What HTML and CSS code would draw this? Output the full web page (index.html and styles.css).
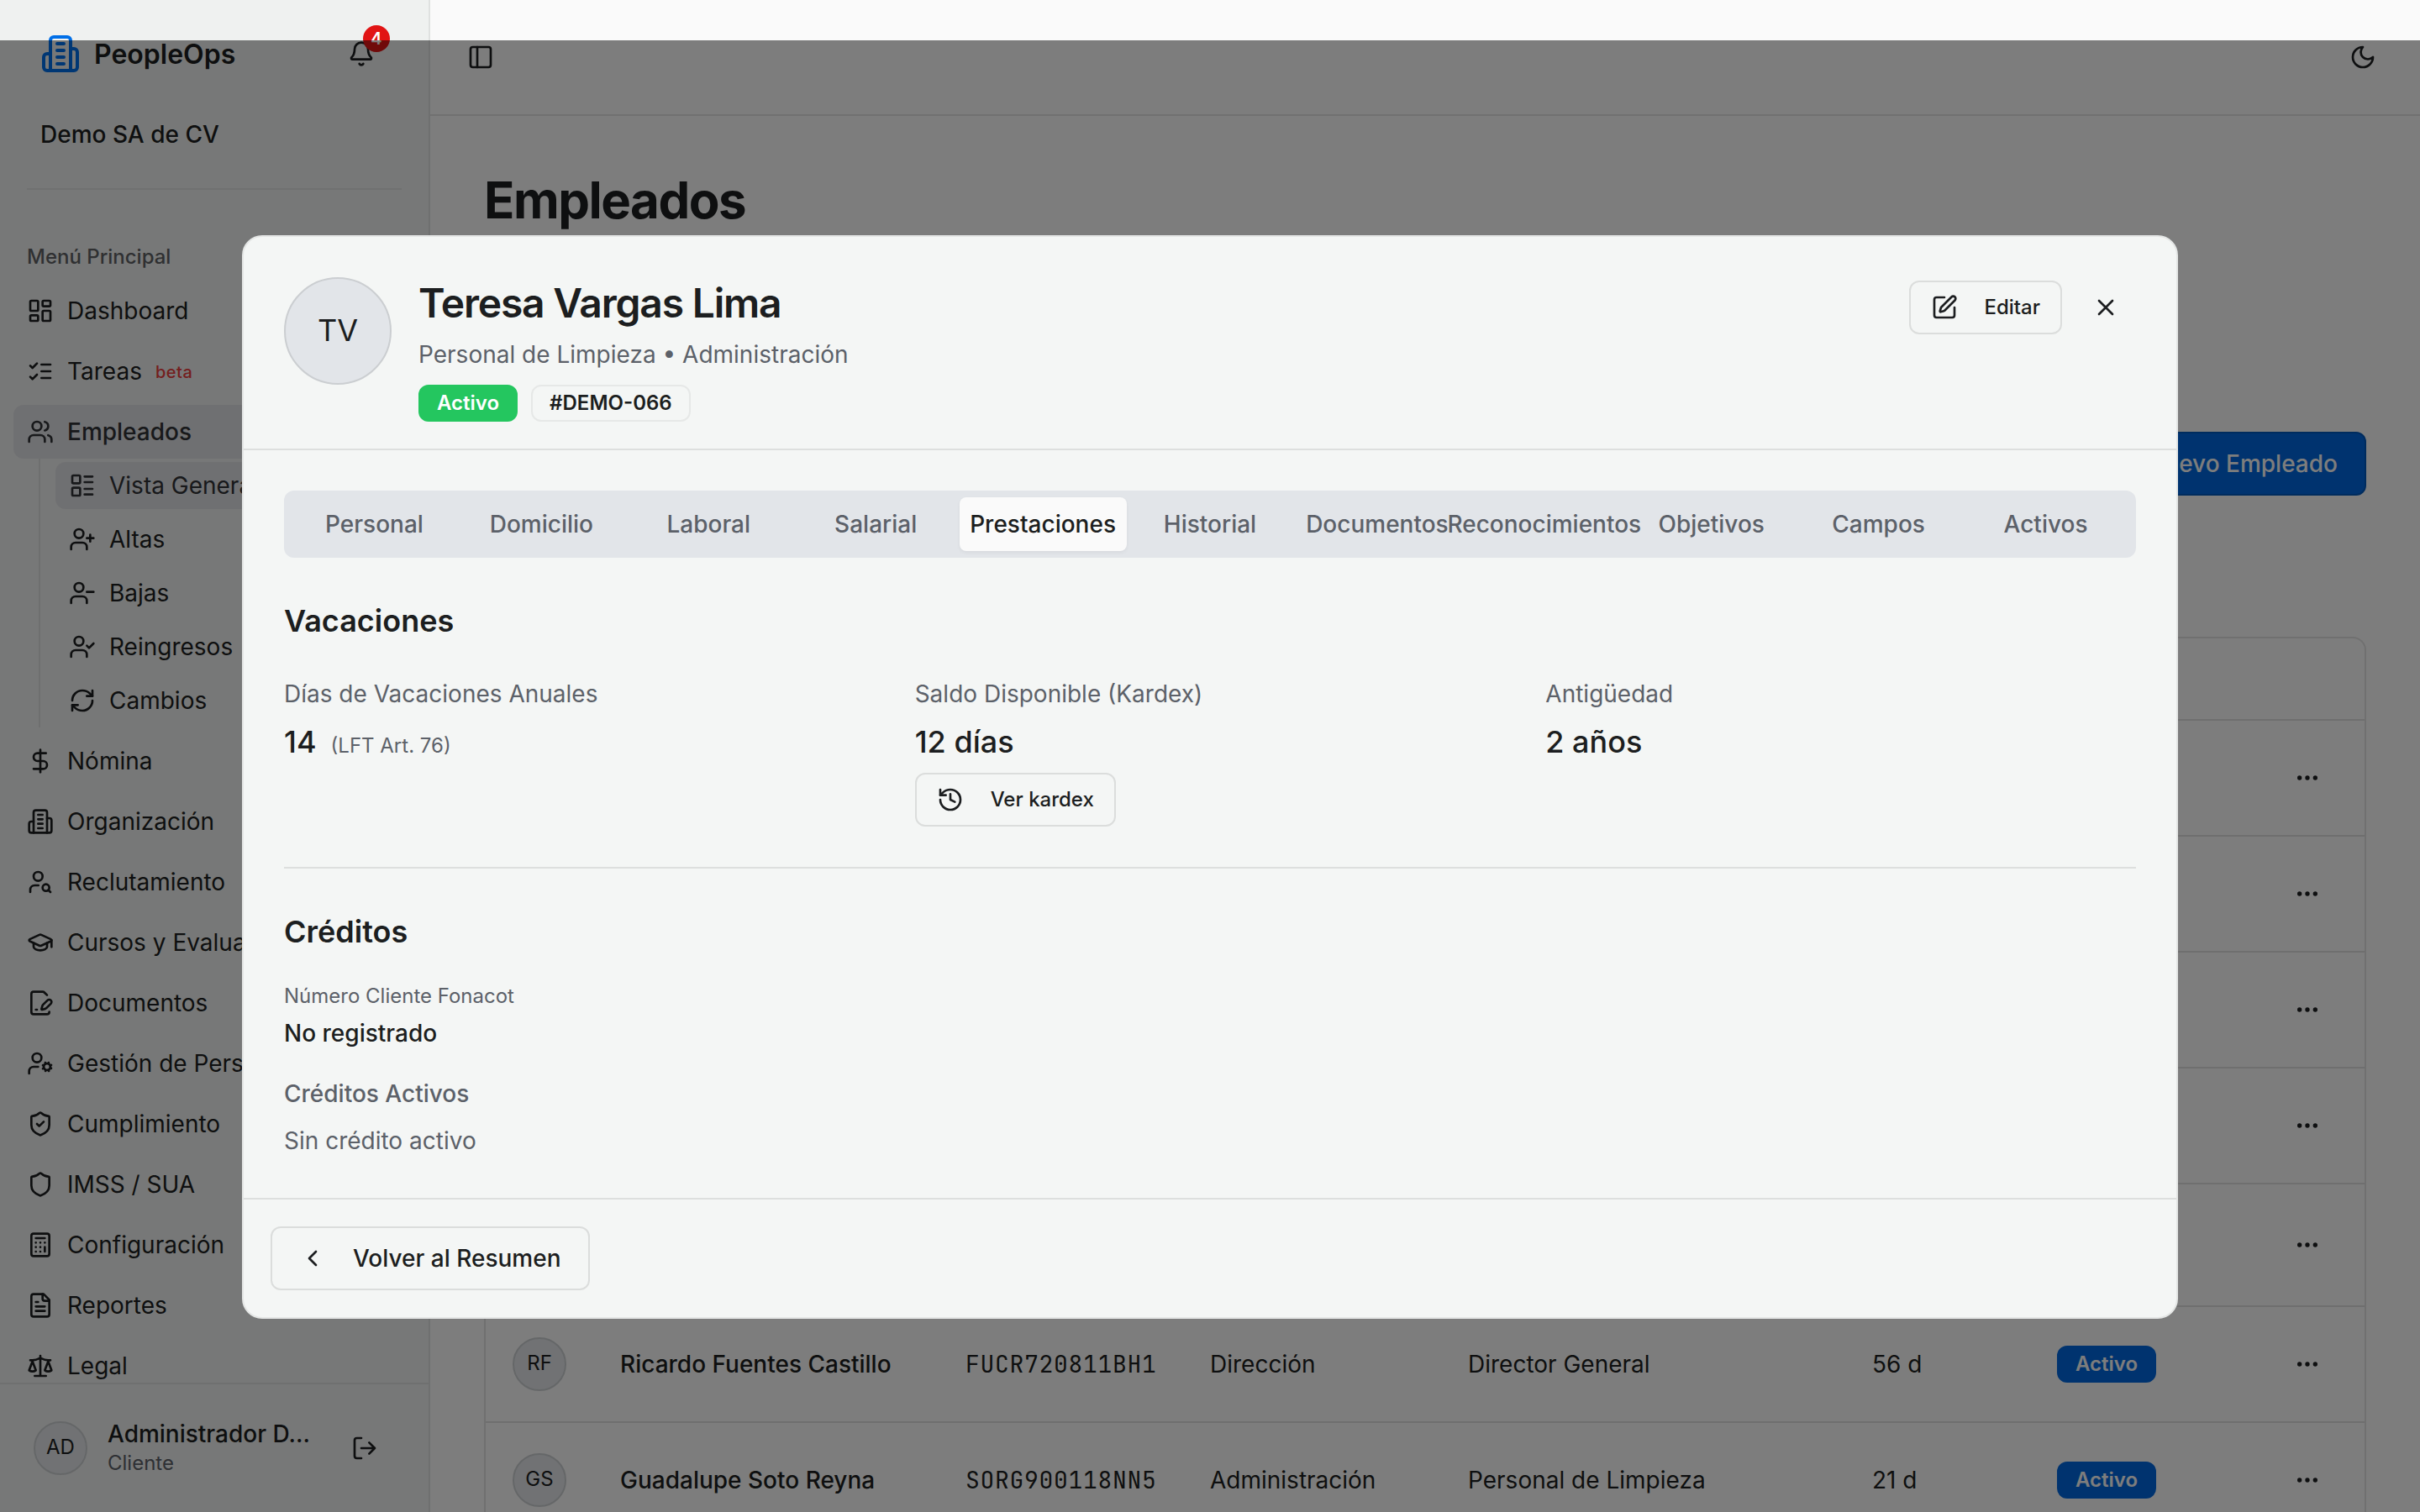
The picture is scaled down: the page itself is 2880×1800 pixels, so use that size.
FILE: index.html
```
<!DOCTYPE html>
<html lang="es">
<head>
<meta charset="utf-8">
<title>PeopleOps - Empleados</title>
<link rel="stylesheet" href="styles.css">
</head>
<body>
<svg class="sprite" aria-hidden="true">
  <symbol id="building" viewBox="0 0 24 24"><path d="M6 22V4a2 2 0 0 1 2-2h8a2 2 0 0 1 2 2v18Z"/><path d="M6 12H4a2 2 0 0 0-2 2v6a2 2 0 0 0 2 2h2"/><path d="M18 9h2a2 2 0 0 1 2 2v9a2 2 0 0 1-2 2h-2"/><path d="M10 6h4M10 10h4M10 14h4M10 18h4"/></symbol>
  <symbol id="bell" viewBox="0 0 24 24"><path d="M10.268 21a2 2 0 0 0 3.464 0"/><path d="M3.262 15.326A1 1 0 0 0 4 17h16a1 1 0 0 0 .74-1.673C19.41 13.956 18 12.499 18 8A6 6 0 0 0 6 8c0 4.499-1.411 5.956-2.738 7.326"/></symbol>
  <symbol id="dashboard" viewBox="0 0 24 24"><rect width="7" height="9" x="3" y="3" rx="1"/><rect width="7" height="5" x="14" y="3" rx="1"/><rect width="7" height="9" x="14" y="12" rx="1"/><rect width="7" height="5" x="3" y="16" rx="1"/></symbol>
  <symbol id="checks" viewBox="0 0 24 24"><path d="m3 17 2 2 4-4M3 7l2 2 4-4M13 6h8M13 12h8M13 18h8"/></symbol>
  <symbol id="users" viewBox="0 0 24 24"><path d="M16 21v-2a4 4 0 0 0-4-4H6a4 4 0 0 0-4 4v2"/><circle cx="9" cy="7" r="4"/><path d="M22 21v-2a4 4 0 0 0-3-3.87M16 3.13a4 4 0 0 1 0 7.75"/></symbol>
  <symbol id="layout-list" viewBox="0 0 24 24"><rect width="7" height="7" x="3" y="3" rx="1"/><rect width="7" height="7" x="3" y="14" rx="1"/><path d="M14 4h7M14 9h7M14 15h7M14 20h7"/></symbol>
  <symbol id="user-plus" viewBox="0 0 24 24"><path d="M16 21v-2a4 4 0 0 0-4-4H6a4 4 0 0 0-4 4v2"/><circle cx="9" cy="7" r="4"/><path d="M19 8v6M22 11h-6"/></symbol>
  <symbol id="user-minus" viewBox="0 0 24 24"><path d="M16 21v-2a4 4 0 0 0-4-4H6a4 4 0 0 0-4 4v2"/><circle cx="9" cy="7" r="4"/><path d="M22 11h-6"/></symbol>
  <symbol id="user-check" viewBox="0 0 24 24"><path d="M16 21v-2a4 4 0 0 0-4-4H6a4 4 0 0 0-4 4v2"/><circle cx="9" cy="7" r="4"/><path d="m16 11 2 2 4-4"/></symbol>
  <symbol id="refresh" viewBox="0 0 24 24"><path d="M3 12a9 9 0 0 1 9-9 9.75 9.75 0 0 1 6.74 2.74L21 8"/><path d="M21 3v5h-5"/><path d="M21 12a9 9 0 0 1-9 9 9.75 9.75 0 0 1-6.74-2.74L3 16"/><path d="M8 16H3v5"/></symbol>
  <symbol id="dollar" viewBox="0 0 24 24"><path d="M12 2v20"/><path d="M17 5H9.5a3.5 3.5 0 0 0 0 7h5a3.5 3.5 0 0 1 0 7H6"/></symbol>
  <symbol id="user-search" viewBox="0 0 24 24"><circle cx="10" cy="7" r="4"/><path d="M10.3 15H7a4 4 0 0 0-4 4v2"/><circle cx="17" cy="17" r="3"/><path d="m21 21-1.9-1.9"/></symbol>
  <symbol id="graduation" viewBox="0 0 24 24"><path d="M21.42 10.922a1 1 0 0 0-.019-1.838L12.83 5.18a2 2 0 0 0-1.66 0L2.6 9.08a1 1 0 0 0 0 1.832l8.57 3.908a2 2 0 0 0 1.66 0z"/><path d="M22 10v6"/><path d="M6 12.5V16a6 3 0 0 0 12 0v-3.5"/></symbol>
  <symbol id="file-pen" viewBox="0 0 24 24"><path d="m18 5-2.414-2.414A2 2 0 0 0 14.172 2H6a2 2 0 0 0-2 2v16a2 2 0 0 0 2 2h12a2 2 0 0 0 2-2"/><path d="M21.378 12.626a1 1 0 0 0-3.004-3.004l-4.01 4.012a2 2 0 0 0-.506.854l-.837 2.87a.5.5 0 0 0 .62.62l2.87-.837a2 2 0 0 0 .854-.506z"/><path d="M8 18h1"/></symbol>
  <symbol id="user-cog" viewBox="0 0 24 24"><circle cx="18" cy="15" r="3"/><circle cx="9" cy="7" r="4"/><path d="M10 15H6a4 4 0 0 0-4 4v2"/><path d="m21.7 16.4-.9-.3M15.2 13.9l-.9-.3M16.6 18.7l.3-.9M19.1 12.2l.3-.9M19.6 18.7l-.4-1M16.8 12.3l-.4-1M14.3 16.6l1-.4M20.7 13.8l1-.4"/></symbol>
  <symbol id="shield" viewBox="0 0 24 24"><path d="M20 13c0 5-3.5 7.5-7.66 8.95a1 1 0 0 1-.67-.01C7.5 20.5 4 18 4 13V6a1 1 0 0 1 1-1c2 0 4.5-1.2 6.24-2.72a1.17 1.17 0 0 1 1.52 0C14.51 3.81 17 5 19 5a1 1 0 0 1 1 1z"/></symbol>
  <symbol id="shield-check" viewBox="0 0 24 24"><path d="M20 13c0 5-3.5 7.5-7.66 8.95a1 1 0 0 1-.67-.01C7.5 20.5 4 18 4 13V6a1 1 0 0 1 1-1c2 0 4.5-1.2 6.24-2.72a1.17 1.17 0 0 1 1.52 0C14.51 3.81 17 5 19 5a1 1 0 0 1 1 1z"/><path d="m9 12 2 2 4-4"/></symbol>
  <symbol id="calculator" viewBox="0 0 24 24"><rect width="16" height="20" x="4" y="2" rx="2"/><path d="M8 6h8M16 14v4M16 10h.01M12 10h.01M8 10h.01M12 14h.01M8 14h.01M12 18h.01M8 18h.01"/></symbol>
  <symbol id="file-text" viewBox="0 0 24 24"><path d="M15 2H6a2 2 0 0 0-2 2v16a2 2 0 0 0 2 2h12a2 2 0 0 0 2-2V7Z"/><path d="M14 2v4a2 2 0 0 0 2 2h4M10 9H8M16 13H8M16 17H8"/></symbol>
  <symbol id="scale" viewBox="0 0 24 24"><path d="m16 16 3-8 3 8c-.87.65-1.92 1-3 1s-2.13-.35-3-1Z"/><path d="m2 16 3-8 3 8c-.87.65-1.92 1-3 1s-2.13-.35-3-1Z"/><path d="M7 21h10M12 3v18M3 7h2c2 0 5-1 7-2 2 1 5 2 7 2h2"/></symbol>
  <symbol id="logout" viewBox="0 0 24 24"><path d="m16 17 5-5-5-5M21 12H9M9 21H5a2 2 0 0 1-2-2V5a2 2 0 0 1 2-2h4"/></symbol>
  <symbol id="panel" viewBox="0 0 24 24"><rect width="18" height="18" x="3" y="3" rx="2"/><path d="M9 3v18"/></symbol>
  <symbol id="moon" viewBox="0 0 24 24"><path d="M12 3a6 6 0 0 0 9 9 9 9 0 1 1-9-9Z"/></symbol>
  <symbol id="plus" viewBox="0 0 24 24"><path d="M5 12h14M12 5v14"/></symbol>
  <symbol id="dots" viewBox="0 0 24 24"><circle cx="12" cy="12" r="1"/><circle cx="19" cy="12" r="1"/><circle cx="5" cy="12" r="1"/></symbol>
  <symbol id="edit" viewBox="0 0 24 24"><path d="M12 3H5a2 2 0 0 0-2 2v14a2 2 0 0 0 2 2h14a2 2 0 0 0 2-2v-7"/><path d="M18.375 2.625a1 1 0 0 1 3 3l-9.013 9.014a2 2 0 0 1-.853.505l-2.873.84a.5.5 0 0 1-.62-.62l.84-2.873a2 2 0 0 1 .506-.852z"/></symbol>
  <symbol id="close" viewBox="0 0 24 24"><path d="M18 6 6 18M6 6l12 12"/></symbol>
  <symbol id="history" viewBox="0 0 24 24"><path d="M3 12a9 9 0 1 0 9-9 9.75 9.75 0 0 0-6.74 2.74L3 8"/><path d="M3 3v5h5M12 7v5l4 2"/></symbol>
  <symbol id="chevron" viewBox="0 0 24 24"><path d="m15 18-6-6 6-6"/></symbol>
</svg>

<div class="app">
  <aside class="sidebar">
    <div class="brand">
      <svg class="icon logo"><use href="#building"/></svg>
      <span class="brand-name">PeopleOps</span>
      <span class="bell"><svg class="icon"><use href="#bell"/></svg><span class="bell-count">4</span></span>
    </div>
    <div class="company">Demo SA de CV</div>
    <div class="menu-label">Menú Principal</div>
    <nav class="menu">
      <a class="item"><svg class="icon"><use href="#dashboard"/></svg>Dashboard</a>
      <a class="item"><svg class="icon"><use href="#checks"/></svg>Tareas<span class="beta">beta</span></a>
      <div class="group">
        <a class="item current"><svg class="icon"><use href="#users"/></svg>Empleados</a>
        <div class="submenu">
          <a class="subitem selected"><svg class="icon"><use href="#layout-list"/></svg>Vista General</a>
          <a class="subitem"><svg class="icon"><use href="#user-plus"/></svg>Altas</a>
          <a class="subitem"><svg class="icon"><use href="#user-minus"/></svg>Bajas</a>
          <a class="subitem"><svg class="icon"><use href="#user-check"/></svg>Reingresos</a>
          <a class="subitem"><svg class="icon"><use href="#refresh"/></svg>Cambios</a>
        </div>
      </div>
      <a class="item"><svg class="icon"><use href="#dollar"/></svg>Nómina</a>
      <a class="item"><svg class="icon"><use href="#building"/></svg>Organización</a>
      <a class="item"><svg class="icon"><use href="#user-search"/></svg>Reclutamiento</a>
      <a class="item"><svg class="icon"><use href="#graduation"/></svg>Cursos y Evaluaciones</a>
      <a class="item"><svg class="icon"><use href="#file-pen"/></svg>Documentos</a>
      <a class="item"><svg class="icon"><use href="#user-cog"/></svg>Gestión de Personal</a>
      <a class="item"><svg class="icon"><use href="#shield-check"/></svg>Cumplimiento</a>
      <a class="item"><svg class="icon"><use href="#shield"/></svg>IMSS / SUA</a>
      <a class="item"><svg class="icon"><use href="#calculator"/></svg>Configuración</a>
      <a class="item"><svg class="icon"><use href="#file-text"/></svg>Reportes</a>
      <a class="item"><svg class="icon"><use href="#scale"/></svg>Legal</a>
    </nav>
    <div class="account">
      <span class="avatar">AD</span>
      <div class="account-text"><div class="account-name">Administrador D...</div><div class="account-role">Cliente</div></div>
      <svg class="icon"><use href="#logout"/></svg>
    </div>
  </aside>

  <main class="main">
    <header class="topbar">
      <svg class="icon"><use href="#panel"/></svg>
      <svg class="icon"><use href="#moon"/></svg>
    </header>
    <div class="content">
      <h1 class="page-title">Empleados</h1>
      <div class="actions"><button class="primary"><svg class="icon"><use href="#plus"/></svg>Nuevo Empleado</button></div>
      <div class="table">
        <div class="row head"></div>
        <div class="row"><svg class="icon more"><use href="#dots"/></svg></div>
        <div class="row"><svg class="icon more"><use href="#dots"/></svg></div>
        <div class="row"><svg class="icon more"><use href="#dots"/></svg></div>
        <div class="row"><svg class="icon more"><use href="#dots"/></svg></div>
        <div class="row tall"><svg class="icon more"><use href="#dots"/></svg></div>
        <div class="row"><span class="avatar">RF</span><span class="name">Ricardo Fuentes Castillo</span><span class="rfc">FUCR720811BH1</span><span>Dirección</span><span>Director General</span><span>56 d</span><span class="badge blue">Activo</span><svg class="icon more"><use href="#dots"/></svg></div>
        <div class="row"><span class="avatar">GS</span><span class="name">Guadalupe Soto Reyna</span><span class="rfc">SORG900118NN5</span><span>Administración</span><span>Personal de Limpieza</span><span>21 d</span><span class="badge blue">Activo</span><svg class="icon more"><use href="#dots"/></svg></div>
      </div>
    </div>
  </main>
</div>

<div class="overlay"></div>

<section class="modal" role="dialog">
  <header class="modal-head">
    <span class="avatar large">TV</span>
    <div class="who">
      <h2 class="who-name">Teresa Vargas Lima</h2>
      <p class="who-role">Personal de Limpieza • Administración</p>
      <div class="badges"><span class="badge green">Activo</span><span class="badge outline">#DEMO-066</span></div>
    </div>
    <div class="head-actions">
      <button class="btn small"><svg class="icon"><use href="#edit"/></svg>Editar</button>
      <svg class="icon"><use href="#close"/></svg>
    </div>
  </header>
  <div class="modal-body">
    <div class="tabs">
      <span class="tab">Personal</span><span class="tab">Domicilio</span><span class="tab">Laboral</span><span class="tab">Salarial</span><span class="tab active">Prestaciones</span><span class="tab">Historial</span><span class="tab">Documentos</span><span class="tab">Reconocimientos</span><span class="tab">Objetivos</span><span class="tab">Campos</span><span class="tab">Activos</span>
    </div>
    <section class="vacations">
      <h3 class="section-title">Vacaciones</h3>
      <div class="stats">
        <div><p class="label">Días de Vacaciones Anuales</p><p class="value">14<span class="note">(LFT Art. 76)</span></p></div>
        <div><p class="label">Saldo Disponible (Kardex)</p><p class="value">12 días</p><button class="btn small"><svg class="icon"><use href="#history"/></svg>Ver kardex</button></div>
        <div><p class="label">Antigüedad</p><p class="value">2 años</p></div>
      </div>
    </section>
    <section class="credits">
      <h3 class="section-title">Créditos</h3>
      <p class="client-label">Número Cliente Fonacot</p>
      <p class="client-value">No registrado</p>
      <p class="active-label">Créditos Activos</p>
      <p class="active-value">Sin crédito activo</p>
    </section>
  </div>
  <footer class="modal-foot"><button class="btn"><svg class="icon"><use href="#chevron"/></svg>Volver al Resumen</button></footer>
</section>
</body>
</html>
```
FILE: styles.css
```
* { box-sizing: border-box; }
body, h1, h2, h3, p { margin: 0; }
body {
  position: relative;
  width: 2880px;
  height: 1800px;
  overflow: hidden;
  background: #fafafa;
  color: #1c1e20;
  font: 400 28px/40px Inter, sans-serif;
}
.sprite { display: none; }
.icon {
  flex: none;
  width: 32px;
  height: 32px;
  fill: none;
  stroke: currentColor;
  stroke-width: 2;
  stroke-linecap: round;
  stroke-linejoin: round;
}
button { font: inherit; color: inherit; }

.app { display: flex; height: 1800px; overflow: hidden; }

/* Sidebar */
.sidebar {
  display: flex;
  flex-direction: column;
  width: 512px;
  flex: none;
  background: #eff1f0;
  border-right: 2px solid #dfe1e0;
}
.brand { display: flex; align-items: center; height: 48px; margin: 40px 64px 0 48px; }
.logo { width: 48px; height: 48px; color: #006fe8; }
.brand-name { margin-left: 16px; padding-top: 2px; font-size: 32px; font-weight: 600; flex: 1; }
.bell { position: relative; display: flex; }
.bell-count {
  position: absolute;
  left: 18px;
  top: -18px;
  width: 32px;
  height: 32px;
  border-radius: 50%;
  background: #e11414;
  color: #fff;
  font-size: 20px;
  font-weight: 600;
  line-height: 33px;
  text-align: center;
}
.company { margin: 52px 32px 0; padding: 0 16px 44px; border-bottom: 2px solid #e0e2e1; font-weight: 500; }
.menu-label { margin: 63px 32px 15px; height: 34px; line-height: 34px; font-size: 24px; font-weight: 500; color: #5e6164; }
.menu { display: flex; flex-direction: column; gap: 8px; flex: 1; min-height: 0; padding: 0 16px; overflow: hidden; }
.item, .subitem { display: flex; align-items: center; gap: 16px; flex: none; padding: 0 16px; white-space: nowrap; border-radius: 12px; }
.item { height: 64px; }
.subitem { height: 56px; }
.current, .selected { background: #dfe0e4; color: #303236; }
.current { font-weight: 500; }
.submenu { display: flex; flex-direction: column; gap: 8px; margin: 0 0 0 30px; padding: 4px 0 4px 18px; border-left: 2px solid #dddfde; }
.beta { padding-top: 2px; font-size: 20px; font-weight: 500; letter-spacing: .025em; color: #e83c3c; }
.account { display: flex; align-items: center; height: 154px; padding: 0 60px 0 40px; border-top: 2px solid #dfe1e0; }
.account-text { flex: 1; margin-left: 24px; }
.account-name { font-weight: 500; line-height: 36px; }
.account-role { font-size: 24px; line-height: 34px; color: #5c6169; }

.avatar {
  display: flex;
  align-items: center;
  justify-content: center;
  flex: none;
  width: 64px;
  height: 64px;
  padding-bottom: 2px;
  border: 2px solid #cbced1;
  border-radius: 50%;
  background: #e2e5e9;
  font-size: 24px;
}
.avatar.large { width: 128px; height: 128px; font-size: 36px; }

/* Page */
.main { flex: 1; display: flex; flex-direction: column; }
.topbar { display: flex; flex: none; align-items: center; justify-content: space-between; height: 138px; padding: 0 52px 0 44px; border-bottom: 2px solid #e0e0e0; }
.content { flex: none; padding: 64px 64px 0; }
.page-title { height: 72px; line-height: 72px; font-size: 60px; font-weight: 700; letter-spacing: -.025em; }
.actions { display: flex; justify-content: flex-end; margin-top: 240px; }
.primary {
  display: flex;
  align-items: center;
  gap: 32px;
  height: 76px;
  padding: 0 32px;
  border: 2px solid #0058bd;
  border-radius: 12px;
  background: #0067de;
  color: #fafafa;
  font-weight: 500;
}
.table { margin-top: 168px; border: 2px solid #e0e0e0; border-bottom: 0; border-radius: 16px 16px 0 0; }
.row {
  display: grid;
  grid-template-columns: 128px 411px 291px 307px 481px 220px 200px 1fr;
  align-items: center;
  height: 138px;
  padding: 0 32px;
  border-bottom: 2px solid #dedede;
}
.row.head { height: 98px; }
.row.tall { height: 146px; }
.row .name { font-weight: 500; }
.rfc { font-family: "JetBrains Mono", "Liberation Mono", monospace; letter-spacing: .025em; }
.more { grid-column: 8; justify-self: end; margin-right: 20px; }

.badge {
  justify-self: start;
  height: 44px;
  padding: 0 20px;
  border: 2px solid transparent;
  border-radius: 12px;
  font-size: 24px;
  font-weight: 600;
  line-height: 40px;
}
.badge.blue { background: #0067de; border-color: #0067de; color: #fafafa; }
.badge.green { background: #24c65f; border-color: #24c65f; color: #fff; }
.badge.outline { border-color: #e6e8e7; }

.overlay { position: absolute; inset: 48px 0 0; background: rgba(0, 0, 0, .5); }

/* Employee dialog */
.modal {
  position: absolute;
  left: 288px;
  top: 280px;
  width: 2304px;
  height: 1290px;
  display: flex;
  flex-direction: column;
  border: 2px solid #e4e6e5;
  border-radius: 24px;
  background: #f4f6f5;
}
.modal-head { display: flex; align-items: flex-start; height: 254px; padding: 48px 48px 0; border-bottom: 2px solid #dddfde; }
.who { flex: 1; margin-left: 32px; }
.who-name { height: 62px; line-height: 62px; font-size: 48px; font-weight: 600; letter-spacing: -.025em; }
.who-role { margin-top: 10px; color: #5c6169; }
.badges { display: flex; gap: 16px; margin-top: 16px; }
.head-actions { display: flex; align-items: center; gap: 36px; padding: 4px 20px 0 0; }
.btn {
  display: inline-flex;
  align-items: center;
  gap: 32px;
  height: 76px;
  padding: 0 32px;
  border: 2px solid #dbdddc;
  border-radius: 12px;
  background: transparent;
  font-weight: 500;
}
.btn.small { height: 64px; padding: 0 24px; font-size: 24px; }
.head-actions .btn { gap: 31px; }

.modal-body { flex: 1; padding: 48px 48px 0; }
.tabs { display: grid; grid-template-columns: repeat(11, minmax(0, 1fr)); height: 80px; padding: 8px; border-radius: 12px; background: #e2e5e9; }
.tab { display: flex; align-items: center; justify-content: center; white-space: nowrap; font-weight: 500; color: #5c6169; }
.tab.active { border-radius: 8px; background: #fafafa; color: #1c1e20; box-shadow: 0 2px 4px rgba(0, 0, 0, .05); }

.section-title { height: 56px; line-height: 54px; font-size: 36px; font-weight: 600; }
.vacations { margin-top: 48px; height: 322px; border-bottom: 2px solid #dddfde; }
.stats { display: grid; grid-template-columns: repeat(3, 1fr); gap: 48px; margin-top: 38px; }
.label { color: #5c6169; }
.value { height: 56px; margin: 8px 0 10px; line-height: 58px; font-size: 36px; font-weight: 500; }
.note { margin-left: 17px; font-size: 24px; font-weight: 400; color: #5c6169; }
.credits { padding-top: 48px; }
.client-label { margin-top: 32px; font-size: 24px; line-height: 32px; color: #5c6169; }
.client-value { margin-top: 8px; font-weight: 500; }
.active-label { margin-top: 32px; font-weight: 500; color: #5c6169; }
.active-value { margin-top: 16px; color: #5c6169; }
.modal-foot { height: 142px; padding: 32px; border-top: 2px solid #dddfde; }
```
